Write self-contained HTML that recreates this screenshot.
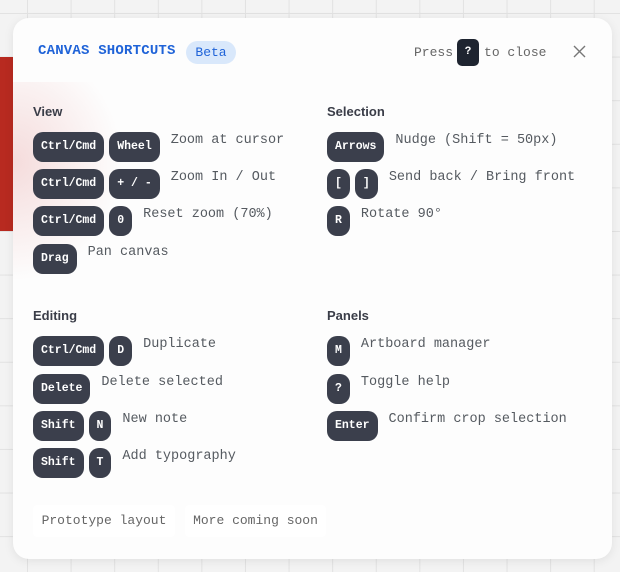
<!DOCTYPE html><html><head><style>
*{margin:0;padding:0;box-sizing:border-box}
body{width:620px;height:572px;overflow:hidden;position:relative;font-family:"Liberation Mono",monospace;
background-color:#f3f3f3;background-image:linear-gradient(#e2e2e2 1px,transparent 1px),linear-gradient(90deg,#e2e2e2 1px,transparent 1px);background-size:43.6px 43.6px;background-position:27px 13px}
.red{position:absolute;left:0;top:57px;width:20px;height:174px;background:#b82a20}
.panel{position:absolute;left:13px;top:18px;width:599px;height:541px;background:#fdfdfd;border-radius:16px;box-shadow:0 2px 10px rgba(0,0,0,.08)}
.glow{position:absolute;left:13px;top:82px;width:110px;height:200px;background:radial-gradient(ellipse at 0% 40%,rgba(220,120,120,.25),rgba(255,255,255,0) 70%)}
.a{position:absolute}
.title{left:38px;top:43px;color:#1f63d8;font-size:14px;font-weight:bold;letter-spacing:.2px}
.beta{left:186px;top:41px;height:23px;width:50px;border-radius:12px;background:#d9e8fb;color:#1f63d8;font-size:13px;text-align:center;line-height:23px}
.press{left:414px;top:39px;height:27px;color:#666;font-size:13px;display:flex;align-items:center;white-space:nowrap}
.q{display:inline-block;background:#1e2430;color:#fff;font-weight:bold;font-size:11px;border-radius:5px;width:22px;height:27px;line-height:27px;text-align:center;margin:0 5px 0 4px}
.h{font-family:"Liberation Sans",sans-serif;font-weight:bold;font-size:13px;color:#3a3d48}
.row{position:absolute;display:flex;align-items:flex-start}
.k{height:30px;line-height:30px;background:#3b3f4c;color:#fff;font-weight:bold;font-size:11.5px;border-radius:10px;padding:0 8px;margin-right:5px;text-align:center;min-width:22px}
.d{font-size:13.5px;color:#555a60;margin-left:6px;margin-top:1px;line-height:16px}
.chip{position:absolute;top:505px;height:32px;line-height:32px;background:#fff;color:#666;font-size:13px;text-align:center;border-radius:4px}
</style></head><body>
<div class="red"></div>
<div class="panel"></div>
<div class="glow"></div>
<div class="a title">CANVAS SHORTCUTS</div>
<div class="a beta">Beta</div>
<div class="a press">Press<span class="q">?</span>to close</div>
<svg class="a" style="left:572px;top:44px" width="15" height="15"><path d="M2 2L13 13M13 2L2 13" stroke="#777" stroke-width="1.4"/></svg>

<div class="a h" style="left:33px;top:104px">View</div>
<div class="row" style="left:33px;top:132px"><span class="k">Ctrl/Cmd</span><span class="k">Wheel</span><span class="d">Zoom at cursor</span></div>
<div class="row" style="left:33px;top:169px"><span class="k">Ctrl/Cmd</span><span class="k">+ / -</span><span class="d">Zoom In / Out</span></div>
<div class="row" style="left:33px;top:206px"><span class="k">Ctrl/Cmd</span><span class="k">0</span><span class="d">Reset zoom (70%)</span></div>
<div class="row" style="left:33px;top:244px"><span class="k">Drag</span><span class="d">Pan canvas</span></div>

<div class="a h" style="left:327px;top:104px">Selection</div>
<div class="row" style="left:327px;top:132px"><span class="k">Arrows</span><span class="d">Nudge (Shift = 50px)</span></div>
<div class="row" style="left:327px;top:169px"><span class="k">[</span><span class="k">]</span><span class="d">Send back / Bring front</span></div>
<div class="row" style="left:327px;top:206px"><span class="k">R</span><span class="d">Rotate 90°</span></div>

<div class="a h" style="left:33px;top:308px">Editing</div>
<div class="row" style="left:33px;top:336px"><span class="k">Ctrl/Cmd</span><span class="k">D</span><span class="d">Duplicate</span></div>
<div class="row" style="left:33px;top:374px"><span class="k">Delete</span><span class="d">Delete selected</span></div>
<div class="row" style="left:33px;top:411px"><span class="k">Shift</span><span class="k">N</span><span class="d">New note</span></div>
<div class="row" style="left:33px;top:448px"><span class="k">Shift</span><span class="k">T</span><span class="d">Add typography</span></div>

<div class="a h" style="left:327px;top:308px">Panels</div>
<div class="row" style="left:327px;top:336px"><span class="k">M</span><span class="d">Artboard manager</span></div>
<div class="row" style="left:327px;top:374px"><span class="k">?</span><span class="d">Toggle help</span></div>
<div class="row" style="left:327px;top:411px"><span class="k">Enter</span><span class="d">Confirm crop selection</span></div>

<div class="chip" style="left:33px;width:142px">Prototype layout</div>
<div class="chip" style="left:185px;width:141px">More coming soon</div>
</body></html>
